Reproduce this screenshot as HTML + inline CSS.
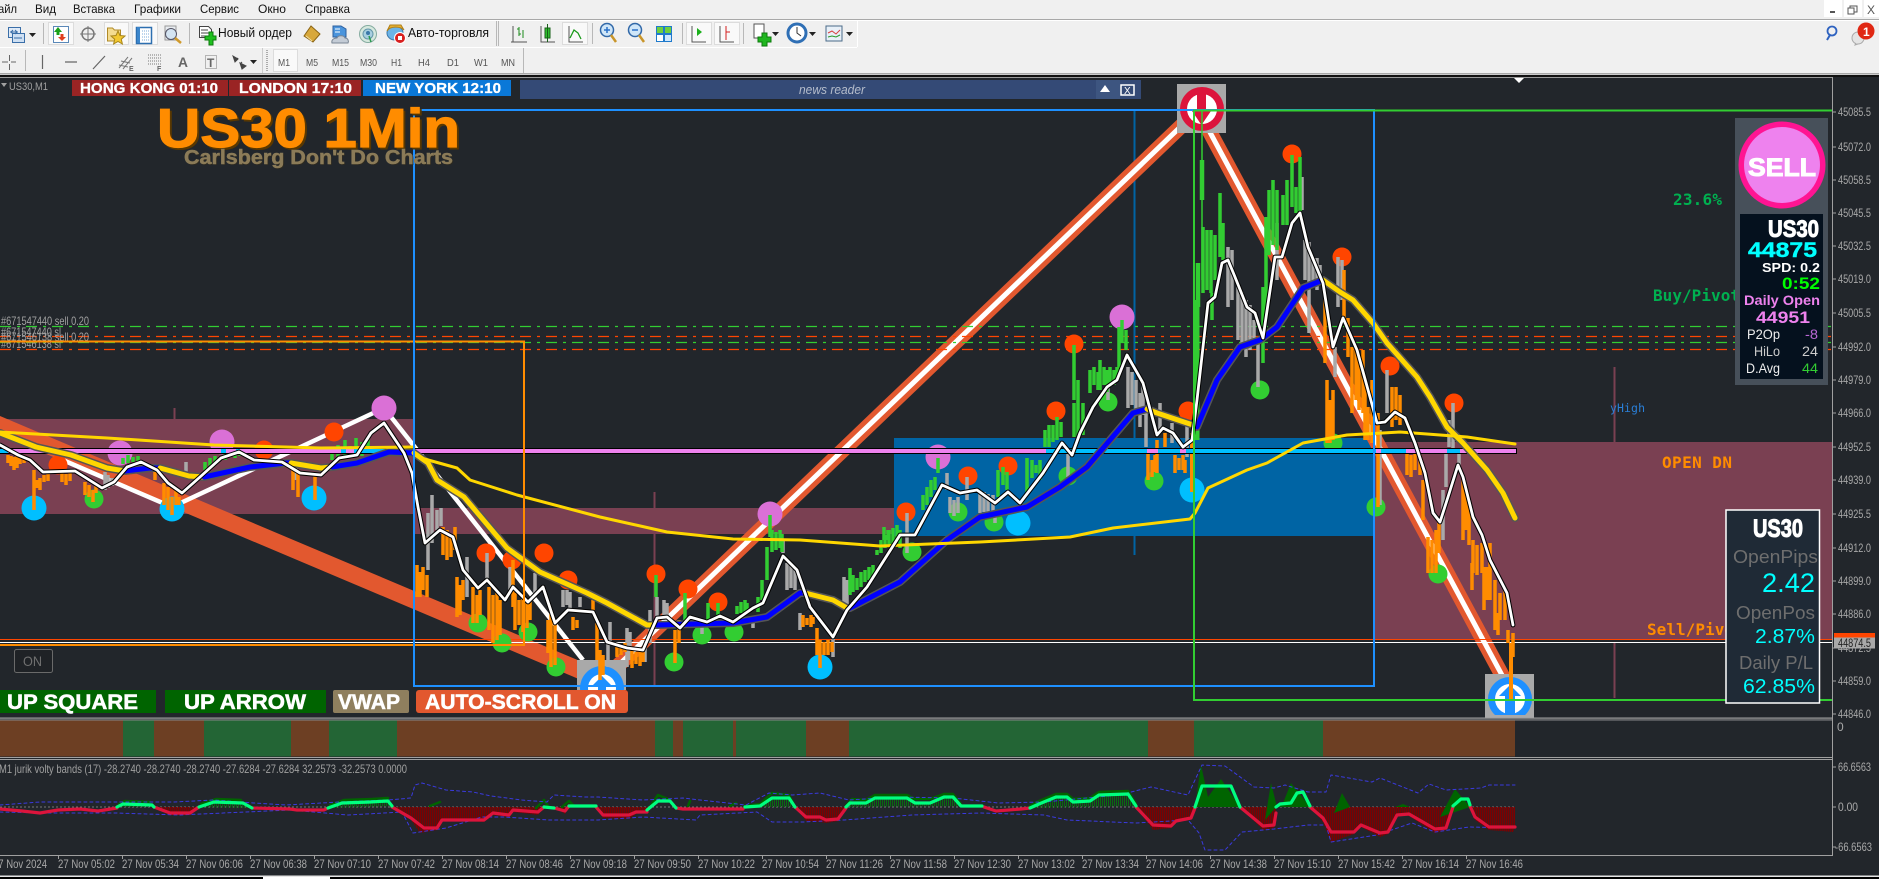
<!DOCTYPE html>
<html><head><meta charset="utf-8"><title>US30</title>
<style>
html,body{margin:0;padding:0;background:#22262b;width:1879px;height:879px;overflow:hidden}
svg{display:block}
text{font-family:"Liberation Sans",sans-serif}
.m{font-family:"DejaVu Sans Mono","Liberation Mono",monospace;font-weight:bold}
.c{fill:none;stroke-linecap:butt}
.j{fill:none;stroke-linejoin:round;stroke-linecap:round}
</style></head><body>
<svg width="1879" height="879" viewBox="0 0 1879 879" xmlns="http://www.w3.org/2000/svg">
<defs>
<pattern id="rh" width="2" height="4" patternUnits="userSpaceOnUse"><rect width="1.500" height="4" fill="#7d0000"/></pattern>
<pattern id="gh" width="2" height="4" patternUnits="userSpaceOnUse"><rect width="1" height="4" fill="#0a6a12"/></pattern>
</defs>
<!-- chrome -->
<rect width="1879" height="879" fill="#22262b"/>
<rect width="1879" height="75" fill="#f0f0f0"/>
<rect y="19" width="1879" height="1" fill="#a8a8a8"/>
<rect y="20" width="1879" height="1" fill="#fff"/>
<rect y="73" width="1879" height="1.500" fill="#a8a8a8"/>
<rect y="75" width="1879" height="2" fill="#111"/>
<rect y="47" width="857" height="1" fill="#fff"/>
<rect x="857" y="20" width="1" height="27" fill="#fff"/>
<rect x="0" y="77" width="1832" height="1" fill="#9a9a9a"/>
<!-- menu -->
<g font-size="12" fill="#111">
<text x="-2" y="13" textLength="19" lengthAdjust="spacingAndGlyphs">айл</text>
<text x="35" y="13" textLength="21" lengthAdjust="spacingAndGlyphs">Вид</text>
<text x="73" y="13" textLength="42" lengthAdjust="spacingAndGlyphs">Вставка</text>
<text x="134" y="13" textLength="47" lengthAdjust="spacingAndGlyphs">Графики</text>
<text x="200" y="13" textLength="39" lengthAdjust="spacingAndGlyphs">Сервис</text>
<text x="258" y="13" textLength="28" lengthAdjust="spacingAndGlyphs">Окно</text>
<text x="305" y="13" textLength="45" lengthAdjust="spacingAndGlyphs">Справка</text>
</g>
<g fill="#fff"><rect x="1824" y="0" width="18" height="17"/><rect x="1844" y="0" width="18" height="17"/><rect x="1864" y="0" width="15" height="17"/></g>
<rect x="1830" y="11" width="5" height="2" fill="#555"/>
<rect x="1850" y="6" width="7" height="6" fill="none" stroke="#555"/><rect x="1848" y="8" width="6" height="6" fill="#fff" stroke="#555"/>
<text x="1867" y="14" font-size="12" fill="#555">X</text>
<!-- row separators -->
<g fill="#b8b8b8"><rect x="43" y="23" width="1" height="21"/><rect x="189" y="23" width="1" height="21"/><rect x="496" y="21" width="1" height="25"/><rect x="498" y="21" width="1" height="25"/><rect x="592" y="23" width="1" height="21"/><rect x="682" y="23" width="1" height="21"/><rect x="743" y="23" width="1" height="21"/><rect x="25" y="50" width="1" height="21"/><rect x="262" y="48" width="1" height="25" fill="#ccc"/><rect x="523" y="48" width="1" height="25"/></g>
<path d="M267 50v21" stroke="#aaa" stroke-width="2" stroke-dasharray="1 1"/>
<!-- active boxes -->
<g fill="#f9f9f9" stroke="#dcdcdc"><rect x="48.500" y="22.500" width="25" height="22"/><rect x="104.500" y="22.500" width="24" height="22"/><rect x="132.500" y="22.500" width="25" height="22"/><rect x="562.500" y="22.500" width="25" height="22"/><rect x="686.500" y="22.500" width="25" height="22"/><rect x="714.500" y="22.500" width="25" height="22"/><rect x="273.500" y="49.500" width="24" height="22"/></g>
<!-- row1 icons -->
<rect x="8.500" y="27.500" width="12" height="10" fill="#dfeaf7" stroke="#3a6ea8"/><rect x="12.500" y="33.500" width="12" height="9" fill="#cfe0f3" stroke="#3a6ea8"/><path d="M10 32h8M13 30l-2 2 2 2M15 30l2 2-2 2M14 38h8" stroke="#3a6ea8" fill="none"/>
<path d="M29 33h7l-3.500 4z" fill="#222"/>
<rect x="53.500" y="26.500" width="15" height="16" fill="#fff" stroke="#5a88b8"/><path d="M58 27l4 5h-2.500v3h-3v-3h-2.500z" fill="#1aa01a"/><path d="M62 41l-4-4h2.500v-3h3v3h2.500z" fill="#e04020"/>
<circle cx="88" cy="34" r="6" fill="none" stroke="#777" stroke-width="1.500"/><path d="M88 26v16M80 34h16" stroke="#777" fill="none"/>
<path d="M107.500 41V28h5l2 2h6v11z" fill="#f4dc90" stroke="#b08a28"/><path d="M118 31l2 4.500 5 .5-3.700 3.200 1.100 4.800-4.400-2.500-4.400 2.500 1.100-4.800-3.700-3.200 5-.5z" fill="#f2c830" stroke="#a8861c"/>
<rect x="136.500" y="27.500" width="15" height="16" fill="#fff" stroke="#2d6fb0" stroke-width="1.500"/><path d="M137 27h3v16h-3z" fill="#3b86cc"/><path d="M142 31h7M142 34h7M142 37h7M142 40h7" stroke="#7aa8d8" stroke-dasharray="1 1"/>
<rect x="165" y="26" width="11" height="14" fill="#e8ecf0" stroke="#999"/><circle cx="171" cy="34" r="5.500" fill="#d4e4f2" stroke="#556"/><path d="M175 38l6 5" stroke="#d09a2c" stroke-width="2.500"/>
<path d="M199.500 26.500h9l3 3v8h-12z" fill="#fff" stroke="#444"/><path d="M201 30h7M201 33h8M201 36h5" stroke="#444"/><path d="M205 36h4v-4h4v4h3v4h-3v5h-4v-5h-4z" fill="#1fc01f" stroke="#0c7a0c"/>
<text x="218" y="37" font-size="12.500" fill="#111" textLength="74" lengthAdjust="spacingAndGlyphs">Новый ордер</text>
<path d="M304 36l7-10 9 8-7 8z" fill="#d8a83c" stroke="#8a6414"/><path d="M306 36l6 5" stroke="#f4e0a0"/>
<path d="M333 26h8l5 3v8h-13z" fill="#4a94dc" stroke="#2d5f9e"/><path d="M335 29h5M335 32h5" stroke="#fff"/><path d="M332 43c-1-4 3-5 5-5 1-3 7-3 8 0 3 0 4 3 3 5z" fill="#c4ccd6" stroke="#7a8694"/>
<circle cx="368" cy="34" r="8.500" fill="#d6e8de" stroke="#86aca0"/><circle cx="368" cy="34" r="5" fill="#a8cfe0" stroke="#6496a8"/><circle cx="368" cy="33" r="2" fill="#3a78a8"/><path d="M369 36l2 6" stroke="#2a9a50" stroke-width="1.500"/>
<ellipse cx="395" cy="33" rx="8" ry="7" fill="#6cb4e8" stroke="#3c78a8"/><path d="M387 31c3-5 13-5 17-1l-3-5h-11z" fill="#e8b030" stroke="#b08018"/><circle cx="400" cy="38" r="5.500" fill="#d82020" stroke="#fff"/><rect x="398" y="36" width="4" height="4" fill="#fff"/>
<text x="408" y="37" font-size="12.500" fill="#111" textLength="81" lengthAdjust="spacingAndGlyphs">Авто-торговля</text>
<g stroke="#555" fill="none"><path d="M513 26v16h14M514 42h-3"/><path d="M541 26v16h14"/><path d="M569 26v16h14"/><path d="M692 26v16h14"/><path d="M720 26v16h14"/></g>
<path d="M519 27v9M519 29h-2M519 34h2M523 30v8" stroke="#1a8a1a" fill="none"/><rect x="545" y="28" width="5" height="10" fill="#2fc02f" stroke="#186018"/><path d="M547.500 24v18" stroke="#186018"/>
<path d="M570 38l4-8 4 3 3 6" fill="none" stroke="#1a9a1a" stroke-width="1.300"/>
<circle cx="607" cy="30" r="6.500" fill="#cfe6f8" stroke="#3168a8" stroke-width="1.500"/><path d="M604 30h6M607 27v6" stroke="#2a70c8" stroke-width="1.500"/><path d="M611 35l5 7" stroke="#c8952a" stroke-width="2.500"/>
<circle cx="635" cy="30" r="6.500" fill="#cfe6f8" stroke="#3168a8" stroke-width="1.500"/><path d="M632 30h6" stroke="#2a70c8" stroke-width="1.500"/><path d="M639 35l5 7" stroke="#c8952a" stroke-width="2.500"/>
<rect x="656" y="26" width="16" height="16" fill="#1f7acc"/><rect x="657" y="27" width="6" height="6" fill="#6fcf3f"/><rect x="665" y="27" width="6" height="6" fill="#6fcf3f"/><rect x="657" y="35" width="6" height="6" fill="#ffffff"/><rect x="665" y="35" width="6" height="6" fill="#cfe8ff"/>
<path d="M697 28l5 4-5 4z" fill="#1ab01a"/><path d="M726 26v14M726 32h4" stroke="#d42020"/>
<rect x="754" y="24" width="10" height="14" fill="#fff" stroke="#555"/><path d="M758 37h4v-4h5v4h4v5h-4v4h-5v-4h-4z" fill="#1fb61f" stroke="#0c7a0c"/>
<path d="M772 32h7l-3.500 4z" fill="#222"/>
<circle cx="797" cy="33" r="9" fill="#fff" stroke="#2f6fb5" stroke-width="3"/><path d="M797 27v6l4 3" stroke="#333" fill="none"/><path d="M809 32h7l-3.500 4z" fill="#222"/>
<rect x="826" y="26" width="16" height="15" fill="#e8f0f8" stroke="#4a6a88"/><path d="M828 33l4-2 4 3 4-4" stroke="#d84040" fill="none"/><path d="M828 37l4-1 4 1 4-2" stroke="#2a9a2a" fill="none"/><path d="M846 32h7l-3.500 4z" fill="#222"/>
<circle cx="1832" cy="31" r="4.500" fill="none" stroke="#2e62c0" stroke-width="1.800"/><path d="M1830 35l-3 5" stroke="#2e62c0" stroke-width="2"/>
<circle cx="1858" cy="38" r="6" fill="#e4e4e4" stroke="#aaa"/><path d="M1856 43l-1 2 3-1" fill="#ddd" stroke="#aaa"/>
<ellipse cx="1866" cy="31" rx="8.500" ry="8.500" fill="#e02814"/><text x="1863" y="36" font-size="12" font-weight="bold" fill="#fff">1</text>
<!-- row2 -->
<path d="M2 62h6M11 62h5M9.500 55v6M9.500 64v6" stroke="#666" fill="none"/>
<path d="M42.500 55v14M65 62h12M93 69l12-13" stroke="#666" fill="none" stroke-width="1.200"/>
<path d="M119 68l9-11M123 69l9-11M121 61l9 2M119 65l9 2" stroke="#777" fill="none"/><text x="129" y="71" font-size="7" font-weight="bold" fill="#666">E</text>
<path d="M148 55h13M148 58h13M148 61h13M148 64h13" stroke="#777" stroke-dasharray="1 1"/><text x="157" y="71" font-size="7" font-weight="bold" fill="#666">F</text>
<text x="178" y="67" font-size="14" font-weight="bold" fill="#666" textLength="10" lengthAdjust="spacingAndGlyphs">A</text>
<rect x="205.500" y="55.500" width="11" height="13" fill="none" stroke="#777" stroke-dasharray="1 1"/><text x="207" y="67" font-size="12" font-weight="bold" fill="#666">T</text>
<path d="M233 56l5 3-3 3zM240 63l6 3-4 3zM236 60l2-2M242 62l-2 2" fill="#444" stroke="#444"/><path d="M250 60h7l-3.500 4z" fill="#222"/>
<g font-size="10.500" fill="#555">
<text x="278" y="66" textLength="12" lengthAdjust="spacingAndGlyphs">M1</text>
<text x="306" y="66" textLength="12" lengthAdjust="spacingAndGlyphs">M5</text>
<text x="332" y="66" textLength="17" lengthAdjust="spacingAndGlyphs">M15</text>
<text x="360" y="66" textLength="17" lengthAdjust="spacingAndGlyphs">M30</text>
<text x="391" y="66" textLength="11" lengthAdjust="spacingAndGlyphs">H1</text>
<text x="418" y="66" textLength="12" lengthAdjust="spacingAndGlyphs">H4</text>
<text x="447" y="66" textLength="12" lengthAdjust="spacingAndGlyphs">D1</text>
<text x="474" y="66" textLength="14" lengthAdjust="spacingAndGlyphs">W1</text>
<text x="501" y="66" textLength="14" lengthAdjust="spacingAndGlyphs">MN</text>
</g>
<!-- zones -->
<rect x="0" y="419" width="414" height="95" fill="#7a4052"/>
<rect x="414" y="508" width="480" height="26" fill="#7a4052"/>
<rect x="1373" y="442" width="459" height="197" fill="#7a4052"/>
<rect x="894" y="438" width="480" height="98" fill="#0064a4"/>
<path d="M174.500 408v11M654.500 492v195M1614.500 367v75M1614.500 643v55" stroke="#7a4052" stroke-width="2" fill="none"/>
<path d="M1134.500 110v445" stroke="#0064a4" stroke-width="2" fill="none"/>
<!-- zigzags -->
<path d="M-10 421L603 680" stroke="#e2582f" stroke-width="17" fill="none"/>
<path d="M603 680L1198 110L1510 690" stroke="#e2582f" stroke-width="15" fill="none"/>
<path d="M603 680L1198 110L1510 690" stroke="#fff" stroke-width="5" fill="none"/>
<path d="M58 458L172 507L384 408L583 660" stroke="#fff" stroke-width="4.500" fill="none"/>
<!-- horizontal lines -->
<g stroke-dasharray="11 6 3 6" stroke-width="1.200" fill="none">
<path d="M0 326.500H1832" stroke="#32cd32"/>
<path d="M0 336.500H1832" stroke="#ff4500"/>
<path d="M0 342.500H1832" stroke="#32cd32"/>
<path d="M0 349.500H1832" stroke="#ff4500"/>
</g>
<path d="M0 639.500H1832" stroke="#ff4500" fill="none"/>
<path d="M0 642.500H1832" stroke="#fff" fill="none"/>
<g font-size="12" fill="#a0a0a0">
<text x="1" y="325" textLength="88" lengthAdjust="spacingAndGlyphs">#671547440 sell 0.20</text>
<text x="1" y="336" textLength="60" lengthAdjust="spacingAndGlyphs">#671547440 sl</text>
<text x="1" y="341" textLength="88" lengthAdjust="spacingAndGlyphs">#671546138 sell 0.20</text>
<text x="1" y="348" textLength="60" lengthAdjust="spacingAndGlyphs">#671546138 sl</text>
</g>
<!-- icons under candles -->
<rect x="577" y="660" width="49" height="30" fill="#a9a9a9"/>
<clipPath id="c1"><rect x="577" y="660" width="49" height="30"/></clipPath>
<g clip-path="url(#c1)"><circle cx="602" cy="688" r="22" fill="#1e90ff"/><circle cx="602" cy="688" r="14" fill="#fff"/><path d="M602 676l10 10h-6v12h-8v-12h-6z" fill="#1e90ff"/></g>
<rect x="1177" y="84" width="49" height="49" fill="#a9a9a9"/>
<circle cx="1202" cy="109" r="22" fill="#dc143c"/><circle cx="1202" cy="109" r="15" fill="#fff"/><path d="M1197 94h9v17h5l-9.500 14-9.500-14h5z" fill="#dc143c"/>
<rect x="1485" y="674" width="49" height="43" fill="#a9a9a9"/>
<clipPath id="c2"><rect x="1485" y="674" width="49" height="43"/></clipPath>
<g clip-path="url(#c2)"><circle cx="1510" cy="699" r="22" fill="#1e90ff"/><circle cx="1510" cy="699" r="15" fill="#fff"/><path d="M1510 685l11 11h-6v21h-10v-21h-6z" fill="#1e90ff"/></g>
<!-- circles -->
<g fill="#da70d6"><circle cx="120" cy="453" r="12.500"/><circle cx="222" cy="442" r="12.500"/><circle cx="384" cy="408" r="12.500"/><circle cx="770" cy="514" r="12.500"/><circle cx="938" cy="457" r="12.500"/><circle cx="1122" cy="317" r="12.500"/></g>
<g fill="#00bfff"><circle cx="34" cy="508" r="12.500"/><circle cx="172" cy="509" r="12.500"/><circle cx="314" cy="498" r="12.500"/><circle cx="820" cy="667" r="12.500"/><circle cx="1018" cy="523" r="12.500"/><circle cx="1192" cy="490" r="12.500"/></g>
<g fill="#ff4500"><circle cx="58" cy="465" r="9.500"/><circle cx="334" cy="432" r="9.500"/><circle cx="264" cy="450" r="9.500"/><circle cx="486" cy="553" r="9.500"/><circle cx="512" cy="560" r="9.500"/><circle cx="544" cy="553" r="9.500"/><circle cx="568" cy="580" r="9.500"/><circle cx="656" cy="574" r="9.500"/><circle cx="688" cy="589" r="9.500"/><circle cx="718" cy="602" r="9.500"/><circle cx="906" cy="512" r="9.500"/><circle cx="968" cy="476" r="9.500"/><circle cx="1008" cy="466" r="9.500"/><circle cx="1056" cy="411" r="9.500"/><circle cx="1074" cy="344" r="9.500"/><circle cx="1188" cy="411" r="9.500"/><circle cx="1292" cy="154" r="9.500"/><circle cx="1342" cy="257" r="9.500"/><circle cx="1390" cy="366" r="9.500"/><circle cx="1454" cy="403" r="9.500"/></g>
<g fill="#32cd32"><circle cx="94" cy="499" r="9.500"/><circle cx="478" cy="623" r="9.500"/><circle cx="502" cy="643" r="9.500"/><circle cx="528" cy="632" r="9.500"/><circle cx="556" cy="667" r="9.500"/><circle cx="674" cy="662" r="9.500"/><circle cx="702" cy="635" r="9.500"/><circle cx="734" cy="632" r="9.500"/><circle cx="912" cy="552" r="9.500"/><circle cx="958" cy="512" r="9.500"/><circle cx="994" cy="522" r="9.500"/><circle cx="1068" cy="476" r="9.500"/><circle cx="1108" cy="402" r="9.500"/><circle cx="1154" cy="481" r="9.500"/><circle cx="1260" cy="390" r="9.500"/><circle cx="1333" cy="443" r="9.500"/><circle cx="1376" cy="507" r="9.500"/><circle cx="1438" cy="574" r="9.500"/></g>
<!-- candles gray -->
<path class="c" stroke="#a9a9a9" stroke-width="3.500" d="M105 472V490M108 475V488M186 462V475M112 478V486M296 468V480M432 495V543M428 513V570M437 510V530M441 508V526M467 557V597M487 553V580M510 567V590M535 573V593M563 590V607M567 590V605M570 592V608M580 597V607M610 622V643M608 642V667M627 628V667M630 632V660M645 647V662M650 610V643M657 597V617M664 600V620M667 603V618M702 620V634M753 617V628M783 540V553M787 563V590M791 566V588M795 570V590M800 613V630M833 638V657M844 577V607M847 580V607M907 513V553M947 473V490M950 497V513M954 500V516M958 497V513M967 477V500M980 490V513M984 492V512M988 494V512M993 495V513M995 510V523M1068 453V477M1108 373V400M1128 367V408M1132 372V405M1136 380V410M1140 393V427M1143 385V415M1146 410V447M1160 403V433M1172 423V443M1187 423V457M1228 247V307M1232 250V300M1238 287V340M1242 292V347M1246 300V357M1250 305V350M1254 320V345M1258 340V387M1277 223V280M1302 177V210M1305 240V280M1309 242V333M1313 260V285M1317 258V290M1320 265V280M1335 347V377M1338 257V307M1342 260V300M1380 430V505M1387 370V413M1453 403V453M1449 420V447M1443 490V540M1446 453V487M1459 453V467"/>
<!-- candles green -->
<path class="c" stroke="#32cd32" stroke-width="3.500" d="M123 458V464M128 455V463M133 457V462M138 456V461M205 462V470M210 458V468M215 456V464M225 452V460M235 450V458M240 448V456M332 450V460M338 445V458M345 440V455M350 446V456M356 438V452M362 442V456M368 436V450M656 575V597M685 593V620M708 603V620M718 603V615M737 606V614M741 602V613M745 600V612M747 603V612M758 597V612M762 580V600M767 547V580M770 515V537M772 530V552M776 532V550M780 530V548M782 534V552M850 568V595M853 575V592M857 578V590M861 572V587M865 570V582M869 567V580M873 565V578M877 550V555M881 540V553M885 535V548M889 530V546M893 528V545M897 525V540M900 530V548M884 527V540M888 530V540M923 495V510M927 487V505M931 480V497M935 477V490M938 458V473M998 470V497M1003 467V485M1007 472V490M1027 458V493M1032 460V478M1036 465V473M1040 460V480M1045 430V447M1049 425V447M1053 425V442M1057 417V440M1061 422V437M1074 345V400M1078 380V437M1074 403V437M1083 403V435M1090 370V393M1094 367V385M1098 372V390M1100 360V390M1104 367V385M1107 370V392M1110 367V387M1114 370V385M1117 367V380M1119 327V377M1122 320V343M1126 330V350M1203 227V293M1207 230V290M1211 230V293M1212 293V320M1215 235V280M1220 193V257M1223 223V260M1263 287V363M1266 217V313M1269 190V255M1273 180V245M1277 190V250M1283 195V225M1287 180V225M1292 155V207M1296 187V213M1300 157V212"/>
<path class="c" stroke="#32cd32" stroke-width="4.500" d="M1196 307V370M1198 263V307M1202 160V200"/>
<path class="c" stroke="#32cd32" stroke-width="1.500" d="M1202 110V280"/>
<path class="c" stroke="#32cd32" stroke-width="5" d="M1197 300V440"/>
<!-- candles orange -->
<path class="c" stroke="#ff8c00" stroke-width="3.500" d="M8 455V463M11 456V466M14 457V470M17 456V468M20 457V464M24 456V463M34 470V510M37 480V488M40 478V490M44 475V482M48 473V481M62 472V482M66 474V485M70 472V481M85 482V495M89 485V497M93 490V502M96 484V493M155 470V480M164 483V505M168 487V510M172 497V515M176 490V505M179 497V505M293 470V490M298 470V497M315 475V500M417 565V597M420 572V597M423 567V590M427 575V597M443 527V555M447 530V560M451 535V557M455 527V550M457 577V617M460 585V615M463 580V600M473 587V623M477 595V623M480 590V615M489 587V630M493 595V643M497 590V640M500 600V635M513 560V607M515 593V630M519 600V625M523 597V632M527 603V628M530 600V620M548 620V653M551 613V667M555 620V665M573 617V630M577 620V628M593 600V613M597 623V660M600 650V680M603 655V675M617 643V657M621 646V655M625 643V652M632 650V668M636 652V664M640 650V666M643 652V662M675 630V663M679 620V643M803 615V627M807 618V625M811 615V627M813 617V624M817 628V655M820 640V668M824 642V655M828 640V655M832 642V652M1148 453V480M1152 460V477M1155 455V472M1157 440V473M1165 433V447M1175 455V473M1179 458V470M1183 455V470M1185 460V473M1325 293V363M1327 380V443M1330 400V443M1333 390V440M1344 270V320M1348 318V357M1352 347V413M1356 350V400M1359 360V410M1363 350V413M1365 380V440M1368 407V440M1372 380V443M1378 413V507M1392 387V427M1396 387V420M1400 395V425M1407 453V475M1411 455V477M1415 452V470M1420 455V475M1423 480V520M1428 537V573M1432 540V573M1436 530V573M1439 523V553M1463 480V540M1466 490V530M1469 500V545M1473 540V573M1472 563V590M1477 545V575M1482 543V573M1484 567V610M1487 567V600M1490 543V600M1495 580V630M1500 593V620M1498 613V635M1505 590V620M1508 630V643M1513 633V657"/>
<path class="c" stroke="#ff8c00" stroke-width="4" d="M1192 433V492M1511 643V700"/>
<!-- pink line -->
<rect x="0" y="448" width="1517" height="6" fill="#000"/>
<rect x="0" y="449" width="1516" height="4" fill="#ee82ee"/>
<g fill="#00bfff"><rect x="0" y="449" width="8" height="4"/><rect x="221" y="449" width="5" height="4"/><rect x="236" y="449" width="4" height="4"/><rect x="341" y="449" width="5" height="4"/><rect x="354" y="449" width="4" height="4"/><rect x="360" y="449" width="30" height="4"/><rect x="1046" y="449" width="101" height="4"/><rect x="1158" y="449" width="22" height="4"/><rect x="1186" y="449" width="4" height="4"/><rect x="1190" y="449" width="186" height="4"/><rect x="1381" y="449" width="25" height="4"/><rect x="1447" y="449" width="13" height="4"/></g>
<!-- MA -->
<path class="j" stroke="#555" stroke-width="8" d="M0 433L36 447L71 455L107 468L125 471L150 468L160 468L189 476L204 477L250 467L286 463L291 463L321 468L332 467L357 463L389 452L414 453L428 463L437 480L464 497L507 548L540 572L587 593L607 603L647 625L657 625L733 623L767 617L800 593L805 593L833 600L847 608L850 608L900 582L947 540L980 517L1027 507L1060 487L1087 467L1133 413L1147 409L1157 413L1193 425L1197 427L1217 380L1240 347L1260 340L1277 327L1303 288L1323 280L1340 292L1353 300L1373 323L1387 343L1417 377L1430 397L1447 427L1463 443L1487 470L1503 493L1515 518"/>
<g class="j" stroke-width="5" fill="none">
<path stroke="#ffd700" d="M0 433L36 447L71 455L107 468L125 471"/>
<path stroke="#0000ff" d="M125 471L150 468L160 468"/>
<path stroke="#ffd700" d="M160 468L189 476L204 477"/>
<path stroke="#0000ff" d="M204 477L250 467L286 463L291 463"/>
<path stroke="#ffd700" d="M291 463L321 468L332 467"/>
<path stroke="#0000ff" d="M332 467L357 463L389 452L414 453"/>
<path stroke="#ffd700" d="M414 453L428 463L437 480L464 497L507 548L540 572L587 593L607 603L647 625L657 625"/>
<path stroke="#0000ff" d="M657 625L733 623L767 617L800 593L805 593"/>
<path stroke="#ffd700" d="M805 593L833 600L847 608L850 608"/>
<path stroke="#0000ff" d="M850 608L900 582L947 540L980 517L1027 507L1060 487L1087 467L1133 413L1147 409"/>
<path stroke="#ffd700" d="M1147 409L1157 413L1193 425L1197 427"/>
<path stroke="#0000ff" d="M1197 427L1217 380L1240 347L1260 340L1277 327L1303 288L1323 280"/>
<path stroke="#ffd700" d="M1323 280L1340 292L1353 300L1373 323L1387 343L1417 377L1430 397L1447 427L1463 443L1487 470L1503 493L1515 518"/>
</g>
<!-- slow yellow -->
<path class="j" stroke="#ffd700" stroke-width="3" d="M0 432L107 438L214 445L321 448L414 447M414 452L421 458L457 468L470 480L517 495L600 517L667 532L733 539L800 540L867 545L880 546L980 542L1070 537L1113 528L1190 519L1195 513L1208 488L1247 470L1267 463L1303 443L1347 435L1400 432L1467 437L1515 444"/>
<!-- white price line -->
<path class="j" stroke="#000" stroke-width="4.800" d="M0 445L18 455L30 460L43 472L75 471L102 488L114 482L127 467L141 462L157 470L168 483L182 493L200 477L221 458L239 452L254 460L282 462L300 473L321 475L339 458L357 455L371 433L384 423L404 453L412 473L418 507L425 543L440 530L453 537L463 570L478 588L487 580L505 600L513 587L528 602L543 587L555 623L568 610L593 612L607 642L627 648L643 650L657 618L667 617L680 628L690 617L707 622L720 616L733 622L753 608L763 603L783 556L797 570L810 607L833 637L847 610L867 587L900 535L915 535L942 485L960 493L977 490L995 503L1008 492L1020 503L1043 473L1062 443L1072 455L1080 433L1093 407L1107 387L1117 380L1127 355L1143 383L1157 435L1163 428L1173 433L1183 447L1192 440L1197 400L1203 347L1208 303L1215 297L1222 263L1228 260L1235 277L1247 307L1255 313L1263 338L1275 257L1282 257L1292 223L1300 213L1308 247L1323 283L1333 347L1343 318L1357 350L1370 397L1377 423L1385 422L1395 412L1405 418L1415 443L1425 473L1433 513L1440 522L1448 497L1458 465L1463 477L1473 517L1482 535L1490 560L1507 593L1513 625"/>
<path class="j" stroke="#fff" stroke-width="2.800" d="M0 445L18 455L30 460L43 472L75 471L102 488L114 482L127 467L141 462L157 470L168 483L182 493L200 477L221 458L239 452L254 460L282 462L300 473L321 475L339 458L357 455L371 433L384 423L404 453L412 473L418 507L425 543L440 530L453 537L463 570L478 588L487 580L505 600L513 587L528 602L543 587L555 623L568 610L593 612L607 642L627 648L643 650L657 618L667 617L680 628L690 617L707 622L720 616L733 622L753 608L763 603L783 556L797 570L810 607L833 637L847 610L867 587L900 535L915 535L942 485L960 493L977 490L995 503L1008 492L1020 503L1043 473L1062 443L1072 455L1080 433L1093 407L1107 387L1117 380L1127 355L1143 383L1157 435L1163 428L1173 433L1183 447L1192 440L1197 400L1203 347L1208 303L1215 297L1222 263L1228 260L1235 277L1247 307L1255 313L1263 338L1275 257L1282 257L1292 223L1300 213L1308 247L1323 283L1333 347L1343 318L1357 350L1370 397L1377 423L1385 422L1395 412L1405 418L1415 443L1425 473L1433 513L1440 522L1448 497L1458 465L1463 477L1473 517L1482 535L1490 560L1507 593L1513 625"/>
<!-- rect outlines -->
<path d="M0 645H524V341.500H0" stroke="#ff8c00" stroke-width="2" fill="none"/>
<rect x="414" y="110" width="960" height="576" stroke="#1e90ff" stroke-width="2" fill="none"/>
<path d="M1832 110.500H1194V700H1832" stroke="#32cd32" stroke-width="2" fill="none"/>
<!-- title -->
<text x="159" y="149" font-size="55" font-weight="bold" fill="#5a3800" stroke="#5a3800" textLength="303" lengthAdjust="spacingAndGlyphs">US30 1Min</text>
<text x="157" y="147" font-size="55" font-weight="bold" fill="#ff8c00" stroke="#ff8c00" stroke-width="1.200" textLength="303" lengthAdjust="spacingAndGlyphs">US30 1Min</text>
<text x="185" y="165" font-size="20" font-weight="bold" fill="#2e2a20" textLength="269" lengthAdjust="spacingAndGlyphs">Carlsberg Don't Do Charts</text>
<text x="184" y="164" font-size="20" font-weight="bold" fill="#8b7b58" stroke="#8b7b58" stroke-width=".5" textLength="269" lengthAdjust="spacingAndGlyphs">Carlsberg Don't Do Charts</text>
<!-- clocks -->
<rect x="72" y="80" width="156" height="16" fill="#9a2424"/><rect x="229" y="80" width="132" height="16" fill="#9a2424"/><rect x="363" y="80" width="148" height="16" fill="#0a78d8"/>
<g font-size="15" font-weight="bold" fill="#fff" stroke="#fff" stroke-width=".3">
<text x="80" y="93" textLength="138" lengthAdjust="spacingAndGlyphs">HONG KONG 01:10</text>
<text x="239" y="93" textLength="113" lengthAdjust="spacingAndGlyphs">LONDON  17:10</text>
<text x="375" y="93" textLength="126" lengthAdjust="spacingAndGlyphs">NEW YORK  12:10</text>
</g>
<rect x="520" y="80" width="621" height="19" fill="#344a76"/>
<rect x="1096" y="80" width="24" height="19" fill="#3d5580"/>
<text x="799" y="94" font-size="12.500" font-style="italic" fill="#b4bccb" textLength="66" lengthAdjust="spacingAndGlyphs">news reader</text>
<path d="M1100 92h10l-5-7z" fill="#fff"/>
<rect x="1121" y="85" width="13" height="10" fill="#344a76" stroke="#fff" stroke-width="1.500"/><text x="1124" y="94" font-size="10" fill="#fff">X</text>
<path d="M1514 78h10l-5 5z" fill="#fff"/>
<path d="M1 83h6l-3 4z" fill="#a0a0a0"/>
<text x="9" y="90" font-size="11" fill="#a0a0a0" textLength="39" lengthAdjust="spacingAndGlyphs">US30,M1</text>
<!-- right text labels -->
<text class="m" x="1673" y="205" font-size="16" fill="#00b050" textLength="49">23.6%</text>
<text class="m" x="1653" y="301" font-size="16" fill="#00b050" textLength="87">Buy/Pivot</text>
<text class="m" x="1662" y="468" font-size="16" fill="#ff8c00" textLength="70">OPEN DN</text>
<text class="m" x="1647" y="635" font-size="16" fill="#ff8c00" textLength="87">Sell/Pivo</text>
<text class="m" x="1610" y="412" font-size="11.500" fill="#2a7fd8" style="font-weight:normal" textLength="35">yHigh</text>
<!-- ON & buttons -->
<rect x="14.500" y="649.500" width="38" height="23" rx="2" fill="#1f2226" stroke="#6a6a6a"/>
<text x="23" y="666" font-size="14" fill="#707070" textLength="19" lengthAdjust="spacingAndGlyphs">ON</text>
<rect x="0" y="690" width="156" height="23" fill="#006400"/><rect x="165" y="690" width="161" height="23" fill="#006400"/>
<rect x="333" y="690" width="76" height="23" rx="2" fill="#8f7f5e"/><rect x="416" y="690" width="212" height="23" rx="3" fill="#e2582f"/>
<g font-size="21" font-weight="bold" fill="#fff" stroke="#fff" stroke-width=".5">
<text x="7" y="709" textLength="131" lengthAdjust="spacingAndGlyphs">UP SQUARE</text>
<text x="184" y="709" textLength="122" lengthAdjust="spacingAndGlyphs">UP ARROW</text>
<text x="338" y="709" textLength="62" lengthAdjust="spacingAndGlyphs">VWAP</text>
<text x="425" y="709" textLength="191" lengthAdjust="spacingAndGlyphs">AUTO-SCROLL ON</text>
</g>
<!-- panel 1 -->
<rect x="1735" y="118" width="93" height="267" fill="#47505a"/>
<circle cx="1782" cy="165" r="43.500" fill="#ff1493"/><circle cx="1782" cy="165" r="38" fill="#ee82ee"/>
<text x="1748" y="176" font-size="25" font-weight="bold" fill="#fff" stroke="#fff" stroke-width="1" textLength="68" lengthAdjust="spacingAndGlyphs">SELL</text>
<rect x="1740" y="214" width="83" height="165" fill="#05111e"/>
<g font-weight="bold">
<text x="1768" y="237" font-size="24" fill="#fff" stroke="#fff" stroke-width="1" textLength="51" lengthAdjust="spacingAndGlyphs">US30</text>
<text x="1748" y="257" font-size="21" fill="#00ffff" stroke="#00ffff" stroke-width=".4" textLength="69" lengthAdjust="spacingAndGlyphs">44875</text>
<text x="1762" y="272" font-size="13" fill="#fff" textLength="58" lengthAdjust="spacingAndGlyphs">SPD: 0.2</text>
<text x="1782" y="289" font-size="17" fill="#00ff00" textLength="38" lengthAdjust="spacingAndGlyphs">0:52</text>
<text x="1744" y="305" font-size="14" fill="#ee82ee" textLength="76" lengthAdjust="spacingAndGlyphs">Daily Open</text>
<text x="1756" y="323" font-size="17" fill="#ee82ee" textLength="54" lengthAdjust="spacingAndGlyphs">44951</text>
</g>
<g font-size="14">
<text x="1747" y="339" fill="#eee" textLength="33" lengthAdjust="spacingAndGlyphs">P2Op</text>
<text x="1805" y="339" fill="#ba68d6" textLength="13" lengthAdjust="spacingAndGlyphs">-8</text>
<text x="1754" y="356" fill="#ccc" textLength="26" lengthAdjust="spacingAndGlyphs">HiLo</text>
<text x="1802" y="356" fill="#ccc" textLength="16" lengthAdjust="spacingAndGlyphs">24</text>
<text x="1746" y="373" fill="#eee" textLength="34" lengthAdjust="spacingAndGlyphs">D.Avg</text>
<text x="1802" y="373" fill="#32cd32" textLength="16" lengthAdjust="spacingAndGlyphs">44</text>
</g>
<!-- panel 2 -->
<rect x="1726" y="510" width="93.500" height="193" fill="#1f2a36" stroke="#fff" stroke-width="1.500"/>
<text x="1753" y="537" font-size="25" font-weight="bold" fill="#fff" stroke="#fff" stroke-width="1" textLength="50" lengthAdjust="spacingAndGlyphs">US30</text>
<g>
<text x="1733" y="563" font-size="18" fill="#6e6e6e" textLength="85" lengthAdjust="spacingAndGlyphs">OpenPips</text>
<text x="1762" y="592" font-size="27" fill="#00ffff" textLength="53" lengthAdjust="spacingAndGlyphs">2.42</text>
<text x="1736" y="619" font-size="18" fill="#6e6e6e" textLength="79" lengthAdjust="spacingAndGlyphs">OpenPos</text>
<text x="1755" y="643" font-size="20" fill="#00ffff" textLength="60" lengthAdjust="spacingAndGlyphs">2.87%</text>
<text x="1739" y="669" font-size="18" fill="#6e6e6e" textLength="74" lengthAdjust="spacingAndGlyphs">Daily P/L</text>
<text x="1743" y="693" font-size="20" fill="#00ffff" textLength="72" lengthAdjust="spacingAndGlyphs">62.85%</text>
</g>
<!-- separators & pane 2 -->
<rect x="0" y="715" width="1725" height="5" fill="#22262b"/>
<rect x="1485" y="715" width="49" height="2.500" fill="#a9a9a9"/>
<rect x="0" y="717.500" width="1833" height="1.200" fill="#a0a0a0"/><rect x="0" y="719.500" width="1833" height=".9" fill="#a0a0a0"/>
<g fill="#6d3f23"><rect x="0" y="720.500" width="123" height="36"/><rect x="154" y="720.500" width="50" height="36"/><rect x="291" y="720.500" width="38" height="36"/><rect x="397" y="720.500" width="258" height="36"/><rect x="673" y="720.500" width="10" height="36"/><rect x="733" y="720.500" width="3" height="36"/><rect x="806" y="720.500" width="43" height="36"/><rect x="1148" y="720.500" width="46" height="36"/><rect x="1323" y="720.500" width="192" height="36"/></g>
<g fill="#236535"><rect x="123" y="720.500" width="31" height="36"/><rect x="204" y="720.500" width="87" height="36"/><rect x="329" y="720.500" width="68" height="36"/><rect x="655" y="720.500" width="18" height="36"/><rect x="683" y="720.500" width="50" height="36"/><rect x="736" y="720.500" width="70" height="36"/><rect x="849" y="720.500" width="299" height="36"/><rect x="1194" y="720.500" width="129" height="36"/></g>
<rect x="0" y="757" width="1833" height="1" fill="#a0a0a0"/><rect x="0" y="759" width="1833" height="1" fill="#a0a0a0"/>
<!-- pane 3 -->
<text x="-1" y="773" font-size="12" fill="#a0a0a0" textLength="408" lengthAdjust="spacingAndGlyphs">M1 jurik volty bands  (17) -28.2740 -28.2740 -28.2740 -27.6284 -27.6284 32.2573 -32.2573 0.0000</text>
<path d="M0 807H1515" stroke="#777" stroke-dasharray="2 2" fill="none"/>
<!-- red histogram -->
<path fill="url(#rh)" d="M392 807L411 820L420 833L437 830L442 820L484 822L493 815L509 817L513 812L538 815L544 807ZM554 807L565 814L569 807ZM596 807L603 818L629 819L636 814L647 812L650 807ZM154 807L170 815L190 815L199 807ZM795 807L806 821L820 822L826 823L838 821L846 807ZM1136 807L1153 830L1171 828L1176 821L1191 818L1195 807ZM1240 807L1263 830L1274 828L1276 807ZM1310 807L1323 822L1331 842L1354 834L1361 827L1380 837L1388 834L1397 816L1409 816L1435 833L1446 830L1453 807ZM1470 807L1475 820L1489 830L1513 832L1515 827V807Z"/>
<!-- green histogram -->
<path fill="url(#gh)" d="M117 807L123 804L152 805L154 807ZM199 807L214 802L243 803L252 808ZM328 808L342 803L370 802L388 801L392 806ZM745 807L760 806L772 798L789 798L795 807ZM846 807L850 803L866 803L875 798L907 798L915 803L930 803L944 797L953 797L961 806L982 806ZM1030 808L1039 804L1056 797L1067 797L1073 802L1090 801L1099 795L1128 794L1136 806Z"/>
<g stroke="#006400" stroke-width="2.500" fill="none" class="j">
<path d="M119 804L125 801L150 802M201 804L216 799L241 800M330 805L344 800L372 799L388 798M430 806L440 802M536 808L544 800L548 806M562 807L569 801L574 806M650 807L658 795L668 799L676 808M688 806L690 801M730 806L736 803"/>
<path d="M745 806L760 804L772 793L789 795L795 807M846 806L852 799L866 800L875 795L907 795L915 799L930 799L944 794L953 794L961 804M1030 806L1039 801L1056 794L1067 794L1073 799L1090 798L1099 792L1128 791L1136 804"/>
</g>
<path fill="#006400" d="M1195 807L1201 765L1208 797L1221 779L1240 807ZM1265 820L1271 783L1277 807L1283 803L1291 783L1310 807L1276 807ZM1334 813L1342 793L1350 807ZM1440 817L1455 789L1470 807ZM1395 807L1403 804L1410 807Z"/>
<path class="j" stroke="#3a3adf" stroke-width="1" stroke-dasharray="3 3" d="M0 805L40 802L116 802L174 802L214 800L254 803L286 805L339 802L388 800L411 798L415 785L422 783L446 790L473 792L491 796L522 800L547 802L554 795L585 797L598 797L643 800L683 798L700 800L746 805L769 793L792 795L820 793L849 800L895 797L953 798L998 803L1044 802L1119 795L1151 787L1188 795L1202 765L1225 766L1254 787L1274 788L1285 785L1308 792L1326 792L1331 775L1372 782L1380 778L1418 793L1429 784L1446 790L1481 788L1489 785L1515 785"/>
<path class="j" stroke="#3a3adf" stroke-width="1" stroke-dasharray="3 3" d="M0 812L45 813L116 813L179 815L290 810L348 815L402 812L413 833L446 828L482 817L504 817L549 820L598 820L643 817L696 820L700 815L757 812L772 822L803 822L844 820L912 815L981 813L1044 815L1067 820L1136 823L1188 820L1199 833L1205 850L1225 850L1242 832L1274 829L1308 825L1326 825L1331 842L1377 835L1412 823L1435 832L1469 827L1515 828"/>
<g class="j" stroke-width="3.200">
<path stroke="#dc143c" d="M0 809L22 811L40 813L58 810L80 809L98 811L117 808M154 807L170 813L190 813L199 807M252 808L290 809L297 810L324 810L328 808M392 807L411 818L424 828L437 828L442 820L484 820L493 813L509 815L513 810L538 812L544 807M554 808L565 811L569 806M596 807L603 815L629 815L636 812L647 812M676 808L683 809L700 809L743 809M795 807L806 817L820 817L826 820L838 819L846 808M984 807L996 811L1021 809L1030 808M1136 807L1153 825L1171 826L1176 821L1191 818L1195 808M1240 807L1263 826L1274 825L1276 813M1310 807L1323 818L1331 832L1354 832L1361 825L1380 833L1388 832L1397 815L1409 814L1435 829L1446 828L1453 807M1470 806L1475 817L1489 827L1515 827"/>
<path stroke="#00ff7f" d="M117 807L123 804L152 805L154 807M199 807L214 802L243 803L252 808M328 808L342 803L370 802L388 801L392 806M544 807L554 808M569 806L596 806M647 810L658 801L670 801L676 808M745 807L760 806L772 798L789 798L795 807M846 807L850 803L866 803L875 798L907 798L915 803L930 803L944 797L953 797L961 806L982 806M1030 808L1039 804L1056 797L1067 797L1073 802L1090 801L1099 795L1128 794L1136 806M1195 807L1202 786L1231 786L1240 807M1276 807L1280 804L1291 803L1297 793L1303 792L1310 806M1453 806L1461 799L1468 799L1470 805"/>
</g>
<!-- time axis -->
<rect x="0" y="855" width="1833" height="1" fill="#a0a0a0"/>
<path d="M58.500 855v4M122.500 855v4M186.500 855v4M250.500 855v4M314.500 855v4M378.500 855v4M442.500 855v4M506.500 855v4M570.500 855v4M634.500 855v4M698.500 855v4M762.500 855v4M826.500 855v4M890.500 855v4M954.500 855v4M1018.500 855v4M1082.500 855v4M1146.500 855v4M1210.500 855v4M1274.500 855v4M1338.500 855v4M1402.500 855v4M1466.500 855v4" stroke="#a0a0a0"/>
<g font-size="12" fill="#a8a8a8">
<text x="-7" y="868" textLength="54" lengthAdjust="spacingAndGlyphs">27 Nov 2024</text>
<text x="58" y="868" textLength="57" lengthAdjust="spacingAndGlyphs">27 Nov 05:02</text>
<text x="122" y="868" textLength="57" lengthAdjust="spacingAndGlyphs">27 Nov 05:34</text>
<text x="186" y="868" textLength="57" lengthAdjust="spacingAndGlyphs">27 Nov 06:06</text>
<text x="250" y="868" textLength="57" lengthAdjust="spacingAndGlyphs">27 Nov 06:38</text>
<text x="314" y="868" textLength="57" lengthAdjust="spacingAndGlyphs">27 Nov 07:10</text>
<text x="378" y="868" textLength="57" lengthAdjust="spacingAndGlyphs">27 Nov 07:42</text>
<text x="442" y="868" textLength="57" lengthAdjust="spacingAndGlyphs">27 Nov 08:14</text>
<text x="506" y="868" textLength="57" lengthAdjust="spacingAndGlyphs">27 Nov 08:46</text>
<text x="570" y="868" textLength="57" lengthAdjust="spacingAndGlyphs">27 Nov 09:18</text>
<text x="634" y="868" textLength="57" lengthAdjust="spacingAndGlyphs">27 Nov 09:50</text>
<text x="698" y="868" textLength="57" lengthAdjust="spacingAndGlyphs">27 Nov 10:22</text>
<text x="762" y="868" textLength="57" lengthAdjust="spacingAndGlyphs">27 Nov 10:54</text>
<text x="826" y="868" textLength="57" lengthAdjust="spacingAndGlyphs">27 Nov 11:26</text>
<text x="890" y="868" textLength="57" lengthAdjust="spacingAndGlyphs">27 Nov 11:58</text>
<text x="954" y="868" textLength="57" lengthAdjust="spacingAndGlyphs">27 Nov 12:30</text>
<text x="1018" y="868" textLength="57" lengthAdjust="spacingAndGlyphs">27 Nov 13:02</text>
<text x="1082" y="868" textLength="57" lengthAdjust="spacingAndGlyphs">27 Nov 13:34</text>
<text x="1146" y="868" textLength="57" lengthAdjust="spacingAndGlyphs">27 Nov 14:06</text>
<text x="1210" y="868" textLength="57" lengthAdjust="spacingAndGlyphs">27 Nov 14:38</text>
<text x="1274" y="868" textLength="57" lengthAdjust="spacingAndGlyphs">27 Nov 15:10</text>
<text x="1338" y="868" textLength="57" lengthAdjust="spacingAndGlyphs">27 Nov 15:42</text>
<text x="1402" y="868" textLength="57" lengthAdjust="spacingAndGlyphs">27 Nov 16:14</text>
<text x="1466" y="868" textLength="57" lengthAdjust="spacingAndGlyphs">27 Nov 16:46</text>
</g>
<rect x="0" y="875.500" width="1879" height="1.500" fill="#e6e6e6"/>
<rect x="0" y="877" width="1879" height="2" fill="#000"/>
<rect x="263" y="877" width="67" height="2" fill="#fff"/>
<!-- price axis -->
<rect x="1832" y="77" width="1" height="778" fill="#a0a0a0"/>
<path d="M1832 112h4M1832 147h4M1832 180h4M1832 213h4M1832 246h4M1832 279h4M1832 313h4M1832 347h4M1832 380h4M1832 413h4M1832 447h4M1832 480h4M1832 514h4M1832 548h4M1832 581h4M1832 614h4M1832 648h4M1832 681h4M1832 714h4M1832 767h4M1832 807h4M1832 847h4" stroke="#a0a0a0"/>
<g font-size="12" fill="#a8a8a8">
<text x="1838" y="116" textLength="33" lengthAdjust="spacingAndGlyphs">45085.5</text>
<text x="1838" y="151" textLength="33" lengthAdjust="spacingAndGlyphs">45072.0</text>
<text x="1838" y="184" textLength="33" lengthAdjust="spacingAndGlyphs">45058.5</text>
<text x="1838" y="217" textLength="33" lengthAdjust="spacingAndGlyphs">45045.5</text>
<text x="1838" y="250" textLength="33" lengthAdjust="spacingAndGlyphs">45032.5</text>
<text x="1838" y="283" textLength="33" lengthAdjust="spacingAndGlyphs">45019.0</text>
<text x="1838" y="317" textLength="33" lengthAdjust="spacingAndGlyphs">45005.5</text>
<text x="1838" y="351" textLength="33" lengthAdjust="spacingAndGlyphs">44992.0</text>
<text x="1838" y="384" textLength="33" lengthAdjust="spacingAndGlyphs">44979.0</text>
<text x="1838" y="417" textLength="33" lengthAdjust="spacingAndGlyphs">44966.0</text>
<text x="1838" y="451" textLength="33" lengthAdjust="spacingAndGlyphs">44952.5</text>
<text x="1838" y="484" textLength="33" lengthAdjust="spacingAndGlyphs">44939.0</text>
<text x="1838" y="518" textLength="33" lengthAdjust="spacingAndGlyphs">44925.5</text>
<text x="1838" y="552" textLength="33" lengthAdjust="spacingAndGlyphs">44912.0</text>
<text x="1838" y="585" textLength="33" lengthAdjust="spacingAndGlyphs">44899.0</text>
<text x="1838" y="618" textLength="33" lengthAdjust="spacingAndGlyphs">44886.0</text>
<text x="1838" y="652" textLength="33" lengthAdjust="spacingAndGlyphs">44872.5</text>
<text x="1838" y="685" textLength="33" lengthAdjust="spacingAndGlyphs">44859.0</text>
<text x="1838" y="718" textLength="33" lengthAdjust="spacingAndGlyphs">44846.0</text>
<text x="1837" y="731">0</text>
<text x="1838" y="771" textLength="33" lengthAdjust="spacingAndGlyphs">66.6563</text>
<text x="1838" y="811" textLength="20" lengthAdjust="spacingAndGlyphs">0.00</text>
<text x="1835" y="851" textLength="37" lengthAdjust="spacingAndGlyphs">-66.6563</text>
</g>
<rect x="1834" y="633" width="41" height="7" fill="#ff4500"/>
<rect x="1834" y="637.500" width="41" height="11" fill="#a9a9a9"/>
<text x="1838" y="647" font-size="12" fill="#222" textLength="33" lengthAdjust="spacingAndGlyphs">44874.5</text>
</svg>
</body></html>
